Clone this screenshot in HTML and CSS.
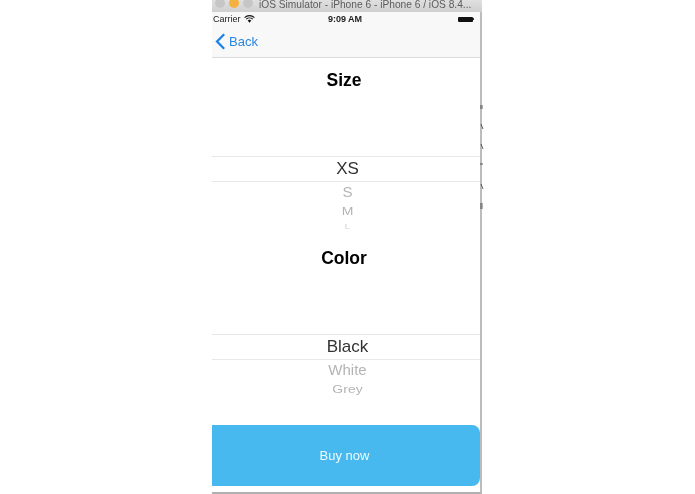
FILE: index.html
```html
<!DOCTYPE html>
<html lang="en">
<head>
  <meta charset="UTF-8">
  <title>iOS Simulator - Buy</title>
  <link rel="stylesheet" href="styles.css">
</head>
<body>
  <div class="window">
    <div class="titlebar">
      <span class="light"></span>
      <span class="light orange"></span>
      <span class="light"></span>
      <span class="window-title">iOS Simulator - iPhone 6 - iPhone 6 / iOS 8.4...</span>
    </div>

    <div class="statusbar">
      <div class="carrier">
        Carrier
        <svg class="wifi" width="11" height="8" viewBox="0 0 11 8">
          <path d="M0.6 2.6C3.4 0 7.6 0 10.4 2.6" fill="none" stroke="#111" stroke-width="1.1"/>
          <path d="M2.2 4.2C4 2.6 7 2.6 8.8 4.2" fill="none" stroke="#111" stroke-width="1.1"/>
          <path d="M3.7 5.6L5.5 4.5L7.3 5.6L5.5 7.8Z" fill="#111"/>
        </svg>
      </div>
      <div class="clock">9:09 AM</div>
      <div class="battery"></div>
    </div>

    <div class="navbar">
      <a class="back" href="#">
        <svg width="11" height="17" viewBox="0 0 11 17">
          <path d="M9.2 1.2L2 8.5L9.2 15.8" fill="none" stroke="#1a7fe6" stroke-width="2.2"/>
        </svg>
        Back
      </a>
    </div>

    <section class="option">
      <h2 class="option-title">Size</h2>
      <div class="wheel">
        <div class="wheel-current">XS</div>
        <div class="wheel-row near">S</div>
        <div class="wheel-row mid">M</div>
        <div class="wheel-row far">L</div>
      </div>
    </section>

    <section class="option">
      <h2 class="option-title">Color</h2>
      <div class="wheel">
        <div class="wheel-current">Black</div>
        <div class="wheel-row near">White</div>
        <div class="wheel-row mid">Grey</div>
      </div>
    </section>

    <a class="buy" href="#">Buy now</a>

    <svg class="behind" width="4" height="110" viewBox="0 0 4 110">
      <path d="M0 2H3M0 4H3M1 20L3 25M1 40L3 45M0 60H3M1 80L3 85M0 100H3M0 102H3M0 104H3" stroke="#333" stroke-width="0.8" fill="none"/>
    </svg>
  </div>
</body>
</html>
```

FILE: styles.css
```css
body {
  margin: 0;
  background: #fff;
  font-family: "Liberation Sans", sans-serif;
  color: #000;
}
.window {
  position: relative;
  width: 268px;
  height: 492px;
  margin-left: 212px;
  border-right: 2px solid #bcbcbc;
  border-bottom: 2px solid #b0b0b0;
  background: #fff;
  filter: blur(0.35px);
}
.titlebar {
  display: flex;
  align-items: flex-start;
  height: 12px;
  margin-right: -2px;
  overflow: hidden;
  background: linear-gradient(#e0e0e0, #cfcfcf);
}
.light {
  flex: none;
  width: 10px;
  height: 10px;
  margin: -2px 0 0 4px;
  border-radius: 50%;
  background: #c6c6c6;
}
.light:first-child {
  margin-left: 3px;
}
.light.orange {
  background: #f5b13f;
}
.window-title {
  margin-left: 6px;
  font-size: 10.2px;
  line-height: 10px;
  color: #5c5c5c;
  white-space: nowrap;
}
.statusbar {
  display: flex;
  align-items: center;
  justify-content: space-between;
  height: 14px;
  padding: 0 3px 0 1px;
  background: #f8f8f8;
  font-size: 9px;
  color: #222;
}
.carrier {
  display: flex;
  align-items: center;
  gap: 3px;
  width: 70px;
}
.clock {
  font-weight: bold;
}
.battery {
  position: relative;
  width: 15px;
  height: 5px;
  margin-right: 4px;
  margin-left: 51px;
  border-radius: 1px;
  background: #111;
}
.battery::after {
  content: "";
  position: absolute;
  top: 1.5px;
  left: 15px;
  width: 1px;
  height: 2px;
  background: #333;
}
.navbar {
  display: flex;
  align-items: center;
  height: 31px;
  background: #f8f8f8;
  border-bottom: 1px solid #dcdcdc;
}
.back {
  display: flex;
  align-items: center;
  gap: 3px;
  margin-left: 3px;
  font-size: 13px;
  color: #2a86e4;
  text-decoration: none;
}
.option {
  height: 178px;
}
.option-title {
  height: 44px;
  margin: 0;
  padding-right: 4px;
  font-size: 17.5px;
  line-height: 45px;
  text-align: center;
}
.wheel {
  padding-top: 54px;
  text-align: center;
}
.wheel-current {
  height: 24px;
  padding-left: 3px;
  border-top: 1px solid #e8e8e8;
  border-bottom: 1px solid #e8e8e8;
  font-size: 17px;
  line-height: 24px;
  color: #333;
}
.wheel-row {
  padding-left: 3px;
  color: #b4b4b4;
}
.wheel-row.near {
  height: 20px;
  font-size: 15px;
  line-height: 20px;
}
.wheel-row.mid {
  height: 19px;
  font-size: 14px;
  line-height: 19px;
  transform: scaleY(0.8);
}
.wheel-row.far {
  height: 11px;
  font-size: 11px;
  line-height: 11px;
  color: #d4d4d4;
  transform: scaleY(0.6);
}
.buy {
  display: flex;
  align-items: center;
  justify-content: center;
  height: 61px;
  margin-top: 11px;
  padding-right: 3px;
  border-radius: 0 8px 8px 0;
  background: #47b9ee;
  font-size: 13px;
  color: #eefaff;
  text-decoration: none;
}
.behind {
  position: absolute;
  top: 104px;
  left: 268px;
}
```
